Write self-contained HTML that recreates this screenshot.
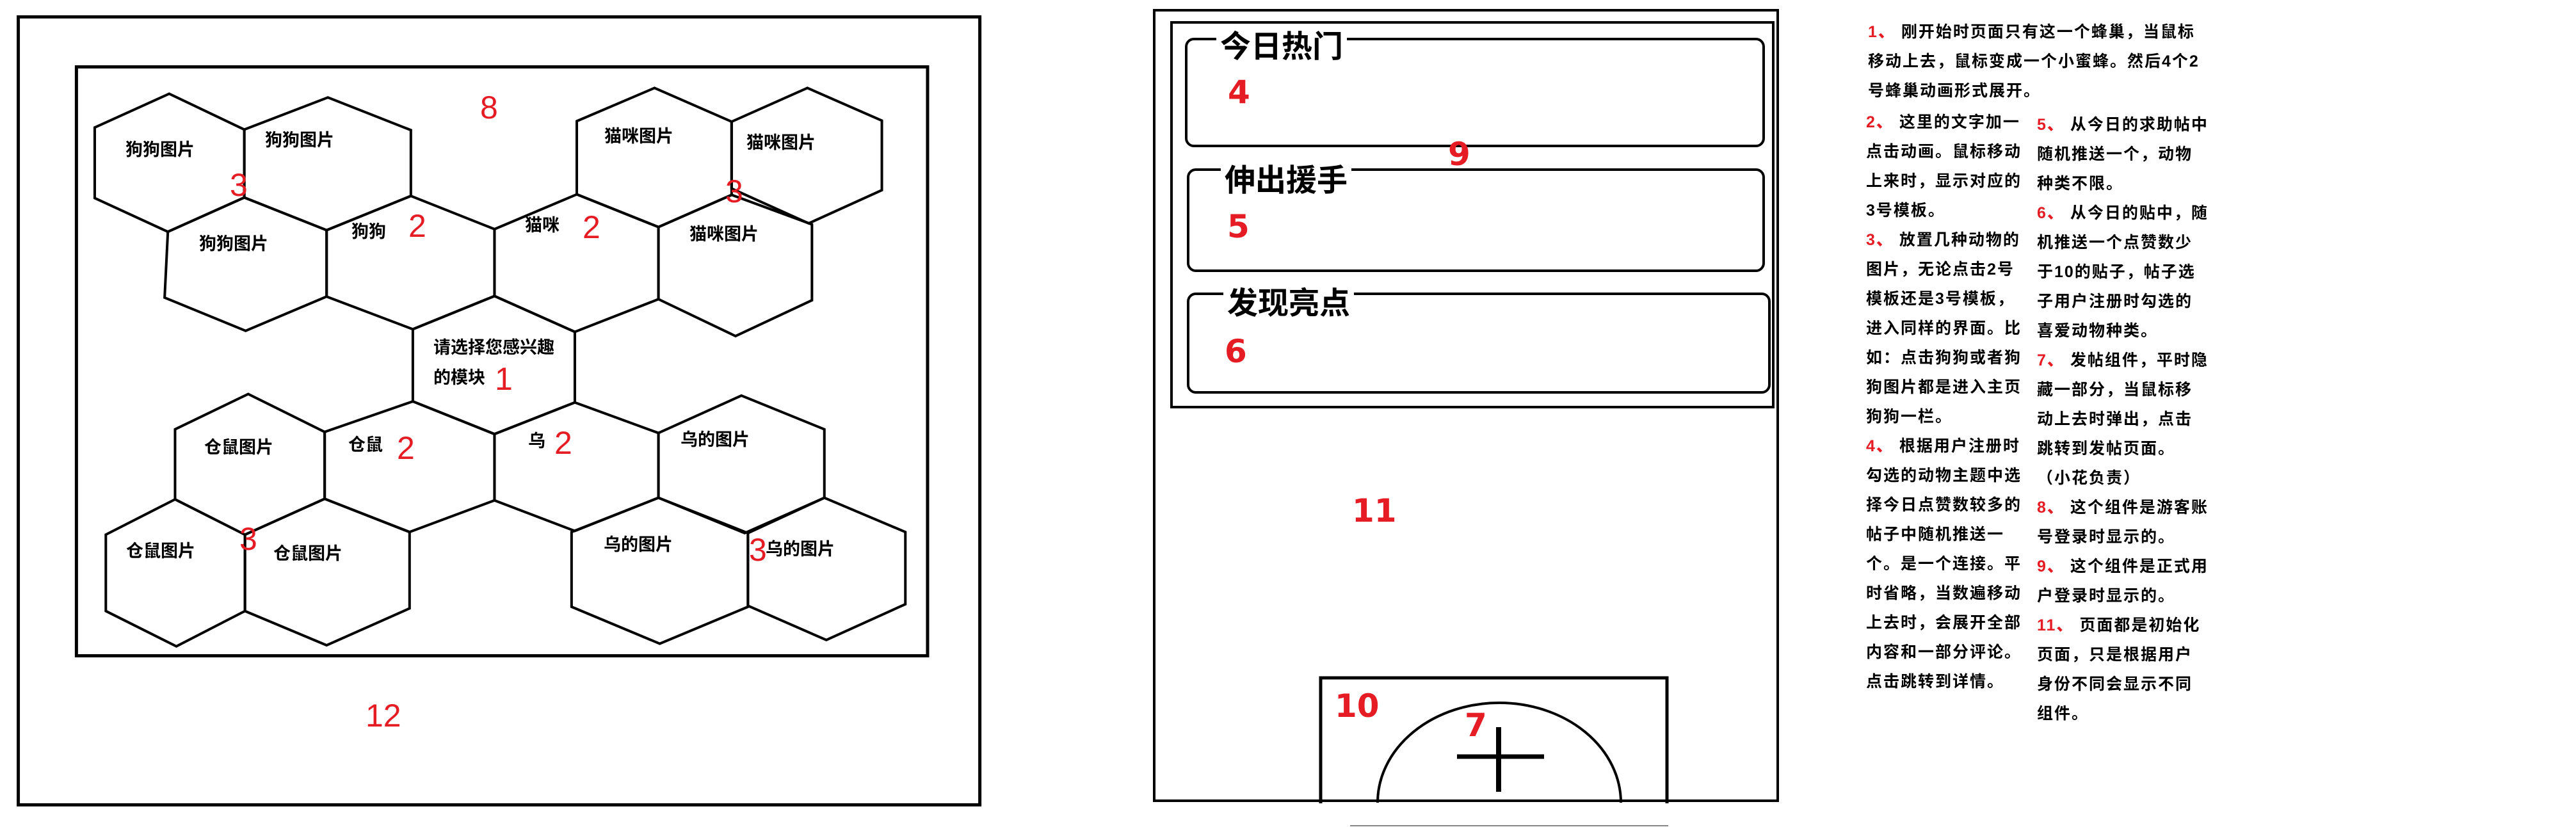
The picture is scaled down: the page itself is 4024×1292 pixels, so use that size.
<!DOCTYPE html>
<html><head><meta charset="utf-8"><style>
html,body{margin:0;padding:0;background:#fff;}
body{width:4024px;height:1292px;position:relative;overflow:hidden;font-family:"Liberation Sans","Noto Sans CJK SC",sans-serif;}
.a{position:absolute;white-space:pre;}
.l{font-size:27px;line-height:27px;font-weight:bold;color:#000;}
.r{font-size:50px;line-height:50px;color:#e51c23;}
.rb{font-family:"DejaVu Sans","Liberation Sans",sans-serif;font-weight:bold;font-size:50px;line-height:50px;color:#e51c23;}
.t{font-size:48px;line-height:48px;font-weight:bold;background:#fff;padding:0 6px;}
.n{font-size:25px;line-height:46px;font-weight:bold;letter-spacing:2px;color:#000;}
.n b{color:#e51c23;}
</style></head><body>
<svg class="a" style="left:0;top:0" width="1600" height="1292" viewBox="0 0 1568 1570" preserveAspectRatio="none">
<g fill="none" stroke="#000" stroke-width="4" stroke-linejoin="miter">
<rect x="28" y="32" width="1472" height="1496" vector-effect="non-scaling-stroke" stroke-width="5"/>
<rect x="117" y="127" width="1303" height="1118" vector-effect="non-scaling-stroke" stroke-width="5"/>
<polygon vector-effect="non-scaling-stroke" points="145,242 259,178 374,246 374,375 257,440 145,376"/>
<polygon vector-effect="non-scaling-stroke" points="374,246 502,185 629,247 629,372 500,437 374,375"/>
<polygon vector-effect="non-scaling-stroke" points="257,440 374,375 500,437 500,563 376,628 252,565"/>
<polygon vector-effect="non-scaling-stroke" points="500,437 629,372 757,435 757,562 632,625 500,563"/>
<polygon vector-effect="non-scaling-stroke" points="757,435 883,369 1008,431 1008,568 880,630 757,562"/>
<polygon vector-effect="non-scaling-stroke" points="883,230 1002,167 1120,231 1120,370 1008,431 883,369"/>
<polygon vector-effect="non-scaling-stroke" points="1120,231 1236,167 1350,229 1350,361 1238,424 1120,358"/>
<polygon vector-effect="non-scaling-stroke" points="1008,431 1120,370 1243,426 1243,570 1126,638 1008,568"/>
<polygon vector-effect="non-scaling-stroke" points="632,625 757,562 880,630 880,764 757,824 632,762"/>
<polygon vector-effect="non-scaling-stroke" points="497,820 632,762 757,824 757,950 627,1010 497,947"/>
<polygon vector-effect="non-scaling-stroke" points="757,824 880,764 1008,822 1008,945 880,1008 757,950"/>
<polygon vector-effect="non-scaling-stroke" points="268,815 380,748 497,820 497,947 375,1015 268,948"/>
<polygon vector-effect="non-scaling-stroke" points="162,1015 268,948 375,1015 375,1160 270,1227 162,1160"/>
<polygon vector-effect="non-scaling-stroke" points="375,1015 497,947 627,1010 627,1155 500,1225 375,1160"/>
<polygon vector-effect="non-scaling-stroke" points="1008,822 1135,751 1262,815 1262,945 1140,1012 1008,945"/>
<polygon vector-effect="non-scaling-stroke" points="875,1010 1008,945 1145,1012 1145,1152 1010,1222 875,1152"/>
<polygon vector-effect="non-scaling-stroke" points="1145,1012 1262,945 1386,1010 1386,1147 1265,1215 1145,1150"/>
</g></svg>

<div class="a l" style="left:196px;top:221px">狗狗图片</div>
<div class="a l" style="left:414px;top:206px">狗狗图片</div>
<div class="a l" style="left:311px;top:368px">狗狗图片</div>
<div class="a l" style="left:549px;top:349px">狗狗</div>
<div class="a l" style="left:820px;top:339px">猫咪</div>
<div class="a l" style="left:944px;top:200px">猫咪图片</div>
<div class="a l" style="left:1166px;top:210px">猫咪图片</div>
<div class="a l" style="left:1077px;top:353px">猫咪图片</div>
<div class="a l" style="left:677px;top:530px">请选择您感兴趣</div>
<div class="a l" style="left:677px;top:577px">的模块</div>
<div class="a l" style="left:319px;top:686px">仓鼠图片</div>
<div class="a l" style="left:544px;top:682px">仓鼠</div>
<div class="a l" style="left:825px;top:676px">乌</div>
<div class="a l" style="left:1063px;top:674px">乌的图片</div>
<div class="a l" style="left:197px;top:848px">仓鼠图片</div>
<div class="a l" style="left:427px;top:852px">仓鼠图片</div>
<div class="a l" style="left:943px;top:838px">乌的图片</div>
<div class="a l" style="left:1196px;top:845px">乌的图片</div>

<div class="a r" style="left:750px;top:143px">8</div>
<div class="a r" style="left:359px;top:264px">3</div>
<div class="a r" style="left:638px;top:328px">2</div>
<div class="a r" style="left:910px;top:330px">2</div>
<div class="a r" style="left:1133px;top:274px">3</div>
<div class="a r" style="left:773px;top:567px">1</div>
<div class="a r" style="left:620px;top:675px">2</div>
<div class="a r" style="left:866px;top:667px">2</div>
<div class="a r" style="left:374px;top:817px">3</div>
<div class="a r" style="left:1170px;top:834px">3</div>
<div class="a r" style="left:571px;top:1093px">12</div>

<!-- middle panel -->
<div class="a" style="left:1801px;top:14px;width:970px;height:1231px;border:4px solid #000;"></div>
<div class="a" style="left:1828px;top:33px;width:936px;height:597px;border:4px solid #000;"></div>
<div class="a" style="left:1851px;top:59px;width:898px;height:163px;border:4px solid #000;border-radius:14px;"></div>
<div class="a" style="left:1854px;top:263px;width:895px;height:154px;border:4px solid #000;border-radius:14px;"></div>
<div class="a" style="left:1854px;top:457px;width:904px;height:150px;border:4px solid #000;border-radius:14px;"></div>
<div class="a t" style="left:1900px;top:50px">今日热门</div>
<div class="a t" style="left:1907px;top:259px">伸出援手</div>
<div class="a t" style="left:1911px;top:451px">发现亮点</div>
<div class="a rb" style="left:1918px;top:119px">4</div>
<div class="a rb" style="left:1917px;top:329px">5</div>
<div class="a rb" style="left:1913px;top:524px">6</div>
<div class="a rb" style="left:2262px;top:216px">9</div>
<div class="a rb" style="left:2112px;top:773px">11</div>

<svg class="a" style="left:2040px;top:1040px" width="600" height="252" viewBox="0 0 600 252">
<g fill="none" stroke="#000">
<polyline points="23,215 23,19 564,19 564,215" stroke-width="5"/>
<path d="M112,214 A190,156 0 0 1 492,214" stroke-width="4"/>
<line x1="236" y1="142" x2="372" y2="142" stroke-width="7"/>
<line x1="301" y1="96" x2="301" y2="197" stroke-width="8"/>
<line x1="69" y1="250" x2="566" y2="250" stroke="#888" stroke-width="2"/>
</g></svg>
<div class="a rb" style="left:2085px;top:1078px">10</div>
<div class="a rb" style="left:2288px;top:1108px">7</div>

<!-- notes -->
<div class="a n" style="left:2918px;top:27px"><b>1、</b> 刚开始时页面只有这一个蜂巢，当鼠标
移动上去，鼠标变成一个小蜜蜂。然后4个2
号蜂巢动画形式展开。</div>
<div class="a n" style="left:2915px;top:168px"><b>2、</b> 这里的文字加一
点击动画。鼠标移动
上来时，显示对应的
3号模板。
<b>3、</b> 放置几种动物的
图片，无论点击2号
模板还是3号模板，
进入同样的界面。比
如：点击狗狗或者狗
狗图片都是进入主页
狗狗一栏。
<b>4、</b> 根据用户注册时
勾选的动物主题中选
择今日点赞数较多的
帖子中随机推送一
个。是一个连接。平
时省略，当数遍移动
上去时，会展开全部
内容和一部分评论。
点击跳转到详情。</div>
<div class="a n" style="left:3182px;top:172px"><b>5、</b> 从今日的求助帖中
随机推送一个，动物
种类不限。
<b>6、</b> 从今日的贴中，随
机推送一个点赞数少
于10的贴子，帖子选
子用户注册时勾选的
喜爱动物种类。
<b>7、</b> 发帖组件，平时隐
藏一部分，当鼠标移
动上去时弹出，点击
跳转到发帖页面。
（小花负责）
<b>8、</b> 这个组件是游客账
号登录时显示的。
<b>9、</b> 这个组件是正式用
户登录时显示的。
<b>11、</b> 页面都是初始化
页面，只是根据用户
身份不同会显示不同
组件。</div>
</body></html>
